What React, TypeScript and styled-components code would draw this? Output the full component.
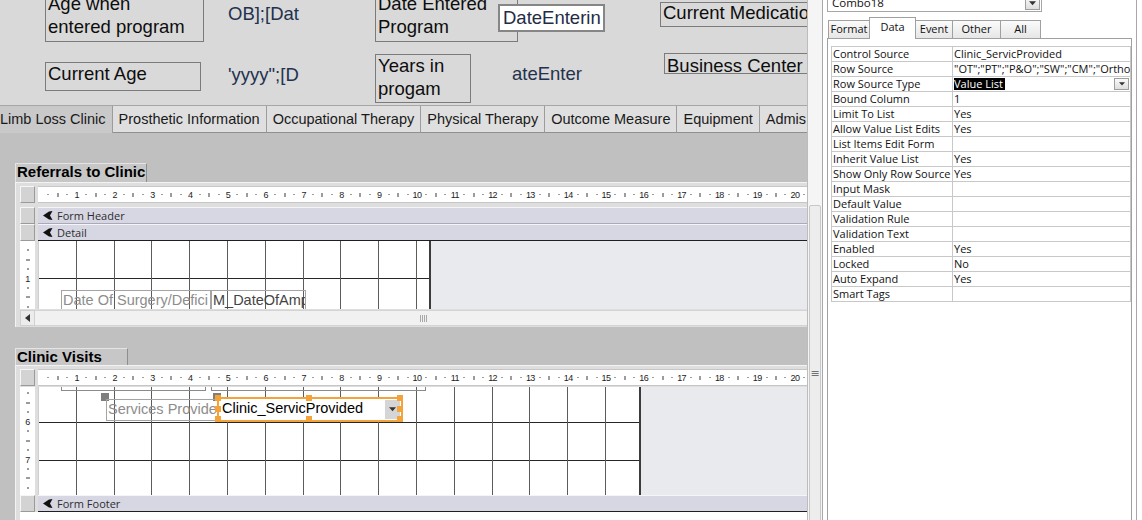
import React from "react";
import styled, { createGlobalStyle } from "styled-components";

const GlobalStyle = createGlobalStyle`
  html, body { margin: 0; padding: 0; background: #ffffff; overflow: hidden; }
  #root { width: 1142px; height: 520px; overflow: hidden; }
`;

const Page = styled.div`
  display: flex;
  width: 1142px;
  height: 520px;
  overflow: hidden;
  background: #ffffff;
`;

/* ---------------- Designer (left) ---------------- */

const Designer = styled.div`
  flex: none;
  width: 807px;
  height: 520px;
  display: flex;
  flex-direction: column;
  overflow: hidden;
  background: #c0c0c0;
  font-family: "Liberation Sans", Arial, sans-serif;
`;

const TopCanvas = styled.div`
  position: relative;
  flex: none;
  height: 105px;
  background: #d9d9d9;
  overflow: hidden;
`;

const CanvasLabel = styled.div<{ $x: number; $y: number; $w: number; $h: number; $lh: number; $pt?: number }>`
  position: absolute;
  left: ${(p) => p.$x}px;
  top: ${(p) => p.$y}px;
  width: ${(p) => p.$w}px;
  height: ${(p) => p.$h}px;
  box-sizing: border-box;
  border: 1px solid #7b7b7b;
  padding: ${(p) => p.$pt ?? 0}px 0 0 2px;
  font-size: 18.5px;
  line-height: ${(p) => p.$lh}px;
  color: #0d0d0d;
  white-space: nowrap;
  overflow: hidden;
`;

const CanvasField = styled.div<{ $x: number; $y: number; $w: number }>`
  position: absolute;
  left: ${(p) => p.$x}px;
  top: ${(p) => p.$y}px;
  width: ${(p) => p.$w}px;
  font-size: 18.5px;
  line-height: 20px;
  color: #23314d;
  white-space: nowrap;
  overflow: hidden;
`;

const CanvasTextBox = styled.div<{ $x: number; $y: number; $w: number; $h: number }>`
  position: absolute;
  left: ${(p) => p.$x}px;
  top: ${(p) => p.$y}px;
  width: ${(p) => p.$w}px;
  height: ${(p) => p.$h}px;
  box-sizing: border-box;
  border: 2px solid #868686;
  background: #ffffff;
  padding: 2px 0 0 3px;
  font-size: 18.5px;
  line-height: 20px;
  color: #1f2c46;
  white-space: nowrap;
  overflow: hidden;
`;

const TabStrip = styled.div`
  flex: none;
  height: 28px;
  box-sizing: border-box;
  border-top: 1px solid #a6a6a6;
  background: #d9d9d9;
  overflow: hidden;
`;

const TabRow = styled.div`
  display: flex;
  height: 27px;
  margin-left: -6px;
`;

const FormTab = styled.div<{ $active?: boolean }>`
  flex: none;
  height: 27px;
  box-sizing: border-box;
  padding: 1px 6px 0 6px;
  border-right: 1px solid #9c9c9c;
  border-bottom: ${(p) => (p.$active ? "none" : "1px solid #8f8f8f")};
  background: ${(p) => (p.$active ? "#c9c9c9" : "#dfdfdf")};
  font-size: 14.5px;
  line-height: 24px;
  color: #1a1a1a;
  white-space: nowrap;
`;

const Body = styled.div`
  flex: 1;
  min-height: 0;
  display: flex;
  flex-direction: column;
  padding: 30px 0 0 15px;
  background: #c0c0c0;
  overflow: hidden;
`;

const Caption = styled.div<{ $w: number; $h: number; $mt?: number }>`
  flex: none;
  width: ${(p) => p.$w}px;
  height: ${(p) => p.$h}px;
  margin-top: ${(p) => p.$mt ?? 0}px;
  box-sizing: border-box;
  border-top: 1px solid #e4e4e4;
  border-left: 1px solid #e4e4e4;
  border-right: 1px solid #8e8e8e;
  background: #c7c7c7;
  padding-left: 1px;
  font-size: 15px;
  font-weight: bold;
  line-height: 16px;
  color: #000;
  white-space: nowrap;
`;

const Frame = styled.div<{ $h?: number }>`
  flex: ${(p) => (p.$h ? "none" : "1")};
  height: ${(p) => (p.$h ? `${p.$h}px` : "auto")};
  min-height: 0;
  box-sizing: border-box;
  border-top: 1px solid #f3f3f3;
  border-left: 1px solid #f3f3f3;
  background: #dedede;
  padding: 3px 0 0 4px;
  display: flex;
  flex-direction: column;
  overflow: hidden;
`;

const FrameRow = styled.div<{ $h: number; $mt?: number }>`
  flex: none;
  height: ${(p) => p.$h}px;
  margin-top: ${(p) => p.$mt ?? 0}px;
  display: grid;
  grid-template-columns: 15px 1fr;
  column-gap: 3px;
`;

const SelectorBox = styled.div`
  box-sizing: border-box;
  background: #d3d3d3;
  border: 1px solid;
  border-color: #f6f6f6 #9a9a9a #9a9a9a #f6f6f6;
`;

/* horizontal ruler */
const HRulerStrip = styled.div`
  box-sizing: border-box;
  background: #ffffff;
  border-top: 1px solid #c6c6c6;
  border-bottom: 1px solid #c6c6c6;
  padding-left: 1px;
  display: flex;
  overflow: hidden;
`;

const HCell = styled.div`
  flex: none;
  width: 37.8px;
  display: grid;
  grid-template-columns: repeat(4, 1fr);
  align-items: center;
`;

const HSlot = styled.div`
  justify-self: end;
  transform: translateX(50%);
  display: flex;
  align-items: center;
  justify-content: center;
`;

const Dot = styled.i`
  display: block;
  width: 1px;
  height: 1px;
  background: #3a3a3a;
`;

const TickV = styled.i`
  display: block;
  width: 1px;
  height: 4px;
  background: #3a3a3a;
`;

const RulerNum = styled.span`
  font-family: "Liberation Sans", Arial, sans-serif;
  font-size: 9px;
  line-height: 10px;
  letter-spacing: -0.6px;
  color: #1c1c1c;
`;

/* vertical ruler */
const VRulerStrip = styled.div`
  background: #ffffff;
  overflow: hidden;
`;

const VCells = styled.div<{ $offset: number }>`
  margin-top: ${(p) => p.$offset}px;
`;

const VCell = styled.div`
  height: 37.8px;
  display: grid;
  grid-template-rows: repeat(4, 1fr);
  justify-items: center;
`;

const VSlot = styled.div`
  align-self: end;
  transform: translateY(50%);
  display: flex;
  align-items: center;
  justify-content: center;
`;

const TickH = styled.i<{ $w: number }>`
  display: block;
  width: ${(p) => p.$w}px;
  height: 1px;
  background: #3a3a3a;
`;

/* section bars */
const SectionBar = styled.div<{ $dark?: boolean }>`
  box-sizing: border-box;
  background: #d7d7e3;
  border-top: 1px solid #f5f5f9;
  border-bottom: 1px solid ${(p) => (p.$dark ? "#1f1f1f" : "#a9a9b8")};
  display: flex;
  align-items: center;
  gap: 4px;
  padding-left: 5px;
  font-family: "Open Sans", "Noto Sans", sans-serif;
  font-size: 11px;
  color: #2d2d2d;
  white-space: nowrap;
`;

const DetailArea = styled.div`
  display: flex;
  border-left: 1px solid #cfcfcf;
  background: #e8eaee;
  overflow: hidden;
`;

const DesignGrid = styled.div<{ $w: number; $oy: number }>`
  position: relative;
  flex: none;
  width: ${(p) => p.$w}px;
  height: 100%;
  overflow: hidden;
  border-right: 2px solid #3c3c3c;
  background-color: #ffffff;
  background-image:
    repeating-linear-gradient(to right, transparent 0 36.8px, #5c5c5c 36.8px 37.8px),
    repeating-linear-gradient(to bottom, transparent 0 36.8px, #262626 36.8px 37.8px);
  background-position: 0 0, 0 ${(p) => p.$oy}px;
`;

const GridLabel = styled.div<{ $x: number; $y: number; $w: number; $h: number; $dark?: boolean; $open?: boolean }>`
  position: absolute;
  left: ${(p) => p.$x}px;
  top: ${(p) => p.$y}px;
  width: ${(p) => p.$w}px;
  height: ${(p) => p.$h}px;
  box-sizing: border-box;
  border: 1px solid #a4a4a4;
  border-bottom-color: ${(p) => (p.$open ? "transparent" : "#a4a4a4")};
  padding-left: 1px;
  font-size: 14.5px;
  line-height: 19px;
  color: ${(p) => (p.$dark ? "#444444" : "#8d8d8d")};
  white-space: nowrap;
  overflow: hidden;
`;

const Bracket = styled.div<{ $x: number; $w: number }>`
  position: absolute;
  left: ${(p) => p.$x}px;
  top: -10px;
  width: ${(p) => p.$w}px;
  height: 14px;
  box-sizing: border-box;
  border: 1px solid #8a8a8a;
`;

const SizeHandle = styled.i<{ $x: number; $y: number }>`
  position: absolute;
  left: ${(p) => p.$x}px;
  top: ${(p) => p.$y}px;
  width: 8px;
  height: 8px;
  background: #7e7e7e;
`;

const ComboCtl = styled.div<{ $x: number; $y: number; $w: number; $h: number }>`
  position: absolute;
  left: ${(p) => p.$x}px;
  top: ${(p) => p.$y}px;
  width: ${(p) => p.$w}px;
  height: ${(p) => p.$h}px;
  box-sizing: border-box;
  border: 2px solid #f2a33a;
  background: #ffffff;
  display: flex;
  align-items: flex-start;
`;

const ComboText = styled.span`
  flex: 1;
  padding-left: 3px;
  font-size: 14.5px;
  line-height: 19px;
  color: #000;
  white-space: nowrap;
  overflow: hidden;
`;

const ComboDrop = styled.span`
  flex: none;
  width: 15px;
  height: 19px;
  margin: 1px 1px 0 0;
  background: #d5d5d5;
  display: flex;
  align-items: center;
  justify-content: center;
`;

const OrangeHandle = styled.i<{ $x: string; $y: string }>`
  position: absolute;
  left: ${(p) => p.$x};
  top: ${(p) => p.$y};
  width: 6px;
  height: 6px;
  margin: -4px 0 0 -4px;
  background: #f2a33a;
`;

const HScroll = styled.div`
  flex: none;
  height: 16px;
  margin-top: 1px;
  display: grid;
  grid-template-columns: 15px 1fr;
`;

const ScrollBtn = styled.div`
  background: #ececec;
  border: 1px solid #d0d0d0;
  box-sizing: border-box;
  display: flex;
  align-items: center;
  justify-content: center;
`;

const ScrollTrack = styled.div`
  background: #f1f1f1;
  border-top: 1px solid #d4d4d4;
  border-bottom: 1px solid #d4d4d4;
  box-sizing: border-box;
  display: flex;
  align-items: center;
  padding-left: 385px;
`;

const Grip = styled.span`
  display: flex;
  gap: 1px;
`;

const GripLine = styled.i`
  display: block;
  width: 1px;
  height: 7px;
  background: #a8a8a8;
`;

const FooterBody = styled.div`
  flex: 1;
  display: grid;
  grid-template-columns: 15px 1fr;
  column-gap: 3px;
  background: #ffffff;
`;

const WhiteCol = styled.div`
  background: #ffffff;
`;

/* ---------------- Splitter ---------------- */

const Splitter = styled.div`
  flex: none;
  width: 15px;
  height: 520px;
  box-sizing: border-box;
  border-left: 1px solid #bcbcbc;
  background: #f5f5f5;
  padding-top: 205px;
  display: flex;
  justify-content: center;
`;

const Thumb = styled.div`
  width: 12px;
  height: 336px;
  box-sizing: border-box;
  border: 1px solid #c8c8c8;
  border-radius: 2px;
  background: #ededed;
  display: flex;
  align-items: center;
  justify-content: center;
  font-family: "DejaVu Sans", sans-serif;
  font-size: 11px;
  color: #707070;
`;

/* ---------------- Property sheet ---------------- */

const PropPane = styled.div`
  flex: none;
  width: 315px;
  height: 520px;
  box-sizing: border-box;
  border-left: 1px solid #a9a9a9;
  border-right: 1px solid #a9a9a9;
  background: #ffffff;
  padding: 0 4px;
  display: flex;
  flex-direction: column;
  font-family: "Open Sans", "Noto Sans", sans-serif;
  font-size: 11px;
  color: #111;
`;

const ObjectCombo = styled.div`
  flex: none;
  width: 215px;
  height: 18px;
  margin-top: -6px;
  box-sizing: border-box;
  border: 1px solid #a6a6a6;
  display: flex;
  align-items: center;
  justify-content: space-between;
  padding: 0 1px 0 4px;
  font-size: 11.5px;
  line-height: 16px;
`;

const MiniDrop = styled.span<{ $w?: number; $h?: number }>`
  flex: none;
  width: ${(p) => p.$w ?? 15}px;
  height: ${(p) => p.$h ?? 14}px;
  box-sizing: border-box;
  border: 1px solid #9e9e9e;
  background: linear-gradient(#fafafa, #dedede);
  display: flex;
  align-items: center;
  justify-content: center;
`;

const SheetTabs = styled.div`
  flex: none;
  height: 21px;
  margin-top: 5px;
  padding-left: 1px;
  display: flex;
  align-items: flex-end;
`;

const SheetTab = styled.div<{ $w: number; $active?: boolean }>`
  position: relative;
  z-index: ${(p) => (p.$active ? 1 : 0)};
  flex: none;
  width: ${(p) => p.$w}px;
  height: ${(p) => (p.$active ? 22 : 18)}px;
  margin-bottom: ${(p) => (p.$active ? -1 : 0)}px;
  margin-right: -1px;
  box-sizing: border-box;
  border: 1px solid #a0a0a0;
  border-bottom: none;
  background: ${(p) => (p.$active ? "#ffffff" : "linear-gradient(#fbfbfb, #e6e6e6)")};
  text-align: center;
  font-size: 11px;
  line-height: ${(p) => (p.$active ? 17 : 16)}px;
  color: #111;
  white-space: nowrap;
`;

const SheetBox = styled.div`
  flex: 1;
  box-sizing: border-box;
  border: 1px solid #a0a0a0;
  border-bottom: none;
  padding: 7px 0 0 3px;
`;

const PropTable = styled.div`
  display: grid;
  grid-template-columns: 121px 1fr;
  border-top: 1px solid #c8c8c8;
  border-left: 1px solid #c8c8c8;
`;

const PropCell = styled.div`
  height: 15px;
  box-sizing: border-box;
  border-right: 1px solid #c8c8c8;
  border-bottom: 1px solid #c8c8c8;
  padding-left: 1px;
  display: flex;
  align-items: center;
  justify-content: space-between;
  line-height: 14px;
  white-space: nowrap;
  overflow: hidden;
`;

const Highlight = styled.span`
  background: #000;
  color: #fff;
  padding-right: 2px;
  line-height: 12px;
`;

const ValueDrop = styled(MiniDrop)`
  margin-right: 1px;
`;

/* ---------------- small drawings ---------------- */

const SectionIcon = () => (
  <svg width="10" height="9" viewBox="0 0 10 9">
    <path d="M0 4.5 L6 0.5 L9.5 0 L7 4.5 L9.5 9 L6 8.5 Z" fill="#111" />
  </svg>
);

const DownArrow = ({ size = 7, color = "#222" }: { size?: number; color?: string }) => (
  <svg width={size} height={Math.ceil(size / 2) + 1} viewBox="0 0 8 5">
    <path d="M0 0 H8 L4 4.5 Z" fill={color} />
  </svg>
);

const LeftArrow = () => (
  <svg width="5" height="8" viewBox="0 0 5 8">
    <path d="M5 0 V8 L0 4 Z" fill="#333" />
  </svg>
);

/* ---------------- composed parts ---------------- */

const HRuler = () => (
  <HRulerStrip>
    {Array.from({ length: 21 }, (_, i) => (
      <HCell key={i}>
        <HSlot><Dot /></HSlot>
        <HSlot><TickV /></HSlot>
        <HSlot><Dot /></HSlot>
        <HSlot><RulerNum>{i + 1}</RulerNum></HSlot>
      </HCell>
    ))}
  </HRulerStrip>
);

const VRuler = ({ offset, start, count }: { offset: number; start: number; count: number }) => (
  <VRulerStrip>
    <VCells $offset={offset}>
      {Array.from({ length: count }, (_, i) => (
        <VCell key={i}>
          <VSlot><TickH $w={2} /></VSlot>
          <VSlot><TickH $w={4} /></VSlot>
          <VSlot><TickH $w={2} /></VSlot>
          <VSlot><RulerNum>{start + i}</RulerNum></VSlot>
        </VCell>
      ))}
    </VCells>
  </VRulerStrip>
);

const Section = ({ label, dark }: { label: string; dark?: boolean }) => (
  <FrameRow $h={17}>
    <SelectorBox />
    <SectionBar $dark={dark}>
      <SectionIcon />
      {label}
    </SectionBar>
  </FrameRow>
);

const properties: [string, string][] = [
  ["Control Source", "Clinic_ServicProvided"],
  ["Row Source", "\"OT\";\"PT\";\"P&O\";\"SW\";\"CM\";\"Ortho"],
  ["Row Source Type", "__VALUELIST__"],
  ["Bound Column", "1"],
  ["Limit To List", "Yes"],
  ["Allow Value List Edits", "Yes"],
  ["List Items Edit Form", ""],
  ["Inherit Value List", "Yes"],
  ["Show Only Row Source", "Yes"],
  ["Input Mask", ""],
  ["Default Value", ""],
  ["Validation Rule", ""],
  ["Validation Text", ""],
  ["Enabled", "Yes"],
  ["Locked", "No"],
  ["Auto Expand", "Yes"],
  ["Smart Tags", ""],
];

const formTabs = [
  "Limb Loss Clinic",
  "Prosthetic Information",
  "Occupational Therapy",
  "Physical Therapy",
  "Outcome Measure",
  "Equipment",
  "Admis",
];

const sheetTabs: { label: string; w: number; active?: boolean }[] = [
  { label: "Format", w: 42 },
  { label: "Data", w: 47, active: true },
  { label: "Event", w: 38 },
  { label: "Other", w: 49 },
  { label: "All", w: 41 },
];

export default function App() {
  return (
    <>
      <GlobalStyle />
      <Page>
        <Designer>
          <TopCanvas>
            <CanvasLabel $x={45} $y={-8} $w={159} $h={50} $lh={22.5}>
              Age when
              <br />
              entered program
            </CanvasLabel>
            <CanvasField $x={228} $y={4} $w={72}>OB];[Dat</CanvasField>
            <CanvasLabel $x={375} $y={-8} $w={143} $h={50} $lh={22.5}>
              Date Entered
              <br />
              Program
            </CanvasLabel>
            <CanvasTextBox $x={498} $y={4} $w={107} $h={28}>DateEnterin</CanvasTextBox>
            <CanvasLabel $x={660} $y={2} $w={160} $h={25} $lh={20}>
              Current Medicatio
            </CanvasLabel>

            <CanvasLabel $x={45} $y={62} $w={156} $h={29} $lh={20} $pt={1}>
              Current Age
            </CanvasLabel>
            <CanvasField $x={228} $y={65} $w={73}>'yyyy";[D</CanvasField>
            <CanvasLabel $x={375} $y={54} $w={96} $h={49} $lh={22.5}>
              Years in
              <br />
              progam
            </CanvasLabel>
            <CanvasField $x={512} $y={64} $w={80}>ateEnter</CanvasField>
            <CanvasLabel $x={664} $y={53} $w={160} $h={21} $lh={20} $pt={2}>
              Business Center
            </CanvasLabel>
          </TopCanvas>

          <TabStrip>
            <TabRow>
              {formTabs.map((t, i) => (
                <FormTab key={t} $active={i === 0}>
                  {t}
                </FormTab>
              ))}
            </TabRow>
          </TabStrip>

          <Body>
            <Caption $w={132} $h={19}>Referrals to Clinic</Caption>
            <Frame $h={145}>
              <FrameRow $h={17}>
                <SelectorBox />
                <HRuler />
              </FrameRow>
              <FrameRow $h={0} $mt={4} />
              <Section label="Form Header" />
              <Section label="Detail" dark />
              <FrameRow $h={68}>
                <VRuler offset={0} start={1} count={2} />
                <DetailArea>
                  <DesignGrid $w={390} $oy={0}>
                    <GridLabel $x={22} $y={49} $w={150} $h={26} $open>
                      Date Of Surgery/Defici
                    </GridLabel>
                    <GridLabel $x={172} $y={49} $w={95} $h={26} $dark $open>
                      M_DateOfAmp
                    </GridLabel>
                  </DesignGrid>
                </DetailArea>
              </FrameRow>
              <HScroll>
                <ScrollBtn>
                  <LeftArrow />
                </ScrollBtn>
                <ScrollTrack>
                  <Grip>
                    <GripLine />
                    <GripLine />
                    <GripLine />
                    <GripLine />
                  </Grip>
                </ScrollTrack>
              </HScroll>
            </Frame>

            <Caption $w={113} $h={17} $mt={21}>Clinic Visits</Caption>
            <Frame>
              <FrameRow $h={17}>
                <SelectorBox />
                <HRuler />
              </FrameRow>
              <FrameRow $h={108} $mt={1}>
                <VRuler offset={-2.8} start={6} count={3} />
                <DetailArea>
                  <DesignGrid $w={600} $oy={-2}>
                    <Bracket $x={22} $w={145} />
                    <Bracket $x={172} $w={215} />
                    <SizeHandle $x={62} $y={6} />
                    <SizeHandle $x={174} $y={6} />
                    <GridLabel $x={67} $y={12} $w={112} $h={22}>
                      Services Provide
                    </GridLabel>
                    <ComboCtl $x={178} $y={10} $w={186} $h={25}>
                      <ComboText>Clinic_ServicProvided</ComboText>
                      <ComboDrop>
                        <DownArrow size={7} color="#333" />
                      </ComboDrop>
                      <OrangeHandle $x="0%" $y="0%" />
                      <OrangeHandle $x="50%" $y="0%" />
                      <OrangeHandle $x="100%" $y="0%" />
                      <OrangeHandle $x="0%" $y="50%" />
                      <OrangeHandle $x="100%" $y="50%" />
                      <OrangeHandle $x="0%" $y="100%" />
                      <OrangeHandle $x="50%" $y="100%" />
                      <OrangeHandle $x="100%" $y="100%" />
                    </ComboCtl>
                  </DesignGrid>
                </DetailArea>
              </FrameRow>
              <Section label="Form Footer" dark />
              <FooterBody>
                <WhiteCol />
                <WhiteCol />
              </FooterBody>
            </Frame>
          </Body>
        </Designer>

        <Splitter>
          <Thumb>≡</Thumb>
        </Splitter>

        <PropPane>
          <ObjectCombo>
            <span>Combo18</span>
            <MiniDrop $w={15} $h={14}>
              <DownArrow size={7} color="#333" />
            </MiniDrop>
          </ObjectCombo>
          <SheetTabs>
            {sheetTabs.map((t) => (
              <SheetTab key={t.label} $w={t.w} $active={t.active}>
                {t.label}
              </SheetTab>
            ))}
          </SheetTabs>
          <SheetBox>
            <PropTable>
              {properties.map(([name, value]) => (
                <React.Fragment key={name}>
                  <PropCell>{name}</PropCell>
                  <PropCell>
                    {value === "__VALUELIST__" ? (
                      <>
                        <Highlight>Value List</Highlight>
                        <ValueDrop $w={15} $h={12}>
                          <DownArrow size={6} color="#333" />
                        </ValueDrop>
                      </>
                    ) : (
                      value
                    )}
                  </PropCell>
                </React.Fragment>
              ))}
            </PropTable>
          </SheetBox>
        </PropPane>
      </Page>
    </>
  );
}
